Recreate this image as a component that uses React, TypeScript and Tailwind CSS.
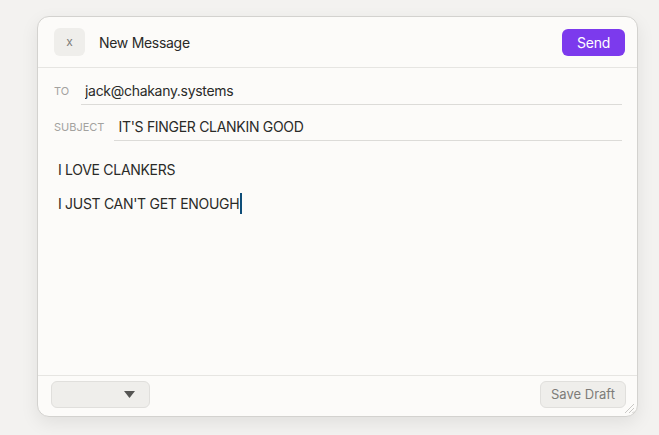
import { useState } from 'react'

const font = { fontFamily: 'Inter, "Noto Sans", sans-serif' }

export default function App() {
  const [to, setTo] = useState('jack@chakany.systems')
  const [subject, setSubject] = useState("IT'S FINGER CLANKIN GOOD")

  return (
    <div className="min-h-screen bg-[#f3f2f0] pl-[37px] pt-[16px]" style={font}>
      <div className="relative flex h-[401px] w-[601px] flex-col rounded-xl border border-[#d3d2cf] bg-[#fcfbf9] shadow-[0_6px_18px_rgba(0,0,0,0.08)]">

        {/* Header */}
        <div className="flex h-[51px] items-center justify-between border-b border-[#e6e5e2] pl-4 pr-3">
          <div className="flex items-center gap-[14px]">
            <button className="flex h-[28px] w-[31px] items-center justify-center rounded-md bg-[#efeeeb] pb-px text-[12px] text-[#7d7c79]">x</button>
            <span className="text-[14px] tracking-[-0.3px] text-[#2a2a28]">New Message</span>
          </div>
          <button className="h-[27px] w-[63px] rounded-md bg-[#7c3aed] text-[14px] tracking-[-0.2px] text-white">Send</button>
        </div>

        {/* Fields */}
        <div className="flex flex-col gap-2 pl-4 pr-[15px] pt-[9px]">
          <div className="flex items-center gap-[16px]">
            <label className="w-[11px] text-[11px] text-[#a3a29f] uppercase">To</label>
            <input value={to} onChange={e => setTo(e.target.value)}
              className="h-[28px] flex-1 border-b border-[#dcdbd8] bg-transparent px-1 text-[14px] tracking-[-0.3px] text-[#2a2a28] outline-none" />
          </div>
          <div className="flex items-center gap-[10px]">
            <label className="text-[11px] text-[#a3a29f] uppercase">Subject</label>
            <input value={subject} onChange={e => setSubject(e.target.value)}
              className="h-[28px] flex-1 border-b border-[#dcdbd8] bg-transparent px-1 text-[14px] tracking-[-0.3px] text-[#2a2a28] outline-none" />
          </div>
        </div>

        {/* Body */}
        <div className="flex-1 pl-5 pt-[19px] text-[14px] leading-5 tracking-[-0.3px] text-[#2a2a28]">
          <p className="mb-[13px]">I LOVE CLANKERS</p>
          <p className="flex items-center">
            I JUST CAN'T GET ENOUGH
            <span className="ml-px inline-block h-[21px] w-[2px] bg-[#0e4d78]" />
          </p>
        </div>

        {/* Footer */}
        <div className="flex h-[41px] items-start justify-between border-t border-[#e6e5e2] pl-[13px] pr-[11px] pt-[5px]">
          <div className="flex h-[27px] w-[99px] items-center justify-end rounded-md border border-[#e0dfdc] bg-[#efeeeb] pr-[14px]">
            <svg width="11" height="7" viewBox="0 0 11 7"><path d="M0 0h11L5.5 7z" fill="#555553" /></svg>
          </div>
          <button className="h-[27px] w-[86px] rounded-md border border-[#e0dfdc] bg-[#efeeeb] text-[13px] text-[#7d7c79]">Save Draft</button>
        </div>

        <svg className="absolute bottom-[2px] right-[2px]" width="12" height="12" viewBox="0 0 12 12">
          <path d="M11 2L2 11M11 6L6 11M11 9.5L9.5 11" stroke="#c9c8c5" strokeWidth="1" />
        </svg>
      </div>
    </div>
  )
}
